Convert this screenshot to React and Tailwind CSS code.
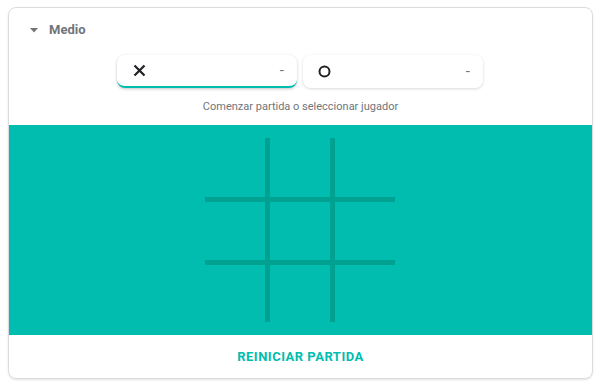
import React from "react";

export default function App() {
  return (
    <div className="w-[600px] h-[383px] bg-white pt-[7px] pl-[8px]" style={{ fontFamily: "Roboto, Arial, sans-serif" }}>
      <div className="w-[585px] h-[372px] rounded-[8px] border border-[#dadce0] overflow-hidden flex flex-col shadow-[0_1px_2px_rgba(60,64,67,0.15)]">
        <div className="h-[43px] flex items-center pl-[21px] pt-[1px]">
          <svg width="8" height="5" viewBox="0 0 8 5" className="mr-[11px]">
            <path d="M0 0 L8 0 L4 4.5 Z" fill="#70757a" />
          </svg>
          <span className="text-[13px] font-bold text-[#70757a]">Medio</span>
        </div>
        <div className="flex justify-center gap-[6px] mt-[4px] pr-[1px]">
          <div className="w-[180px] h-[33px] rounded-[8px] bg-white shadow-[0_1px_3px_rgba(60,64,67,0.3)] border-b-2 border-[#00bdaf] flex items-center justify-between pl-[16px] pr-[13px]">
            <svg width="13" height="13" viewBox="0 0 13 13">
              <path d="M1.5 1.5 L11.5 11.5 M11.5 1.5 L1.5 11.5" stroke="#202124" strokeWidth="2.2" />
            </svg>
            <span className="text-[15px] text-[#70757a]">-</span>
          </div>
          <div className="w-[180px] h-[33px] rounded-[8px] bg-white shadow-[0_1px_3px_rgba(60,64,67,0.2)] flex items-center justify-between pl-[15px] pr-[13px]">
            <svg width="13" height="13" viewBox="0 0 13 13">
              <circle cx="6.5" cy="6.5" r="5" fill="none" stroke="#202124" strokeWidth="2" />
            </svg>
            <span className="text-[15px] text-[#70757a]">-</span>
          </div>
        </div>
        <div className="h-[37px] pt-[2px] flex items-center justify-center text-[11px] text-[#70757a]">
          Comenzar partida o seleccionar jugador
        </div>
        <div className="h-[210px] bg-[#00bdaf] flex items-center justify-center">
          <svg width="190" height="184" viewBox="0 0 190 184" className="-mt-[1px] -ml-[1px]">
            <rect x="60" y="0" width="5" height="184" fill="#00a191" />
            <rect x="125" y="0" width="5" height="184" fill="#00a191" />
            <rect x="0" y="59" width="190" height="5" fill="#00a191" />
            <rect x="0" y="122" width="190" height="5" fill="#00a191" />
          </svg>
        </div>
        <div className="flex-1 flex items-center justify-center">
          <span className="text-[13px] font-bold text-[#00bdaf] tracking-[0.5px]">REINICIAR PARTIDA</span>
        </div>
      </div>
    </div>
  );
}
